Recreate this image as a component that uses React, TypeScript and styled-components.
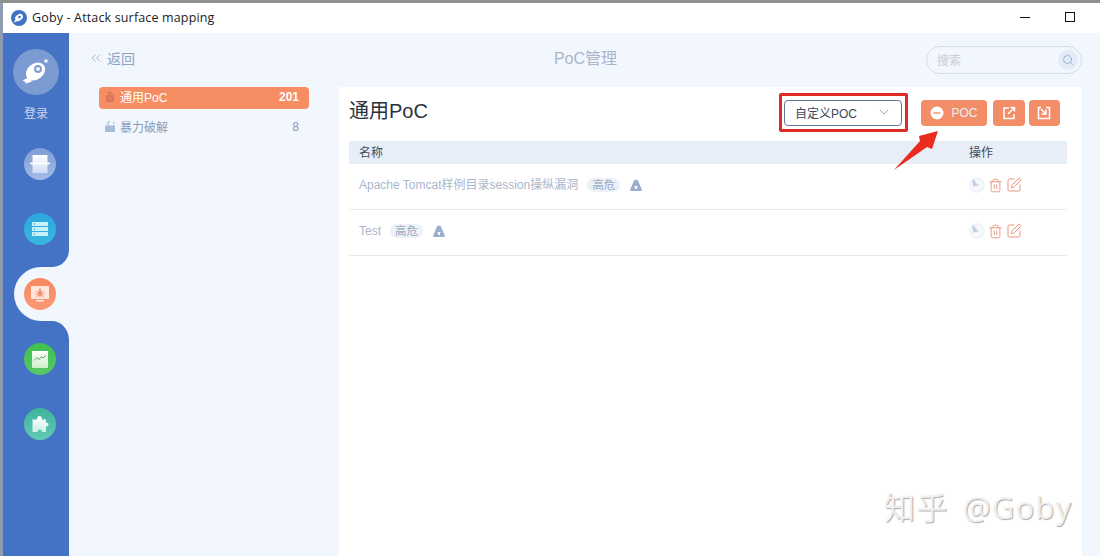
import React from 'react';
import styled, { createGlobalStyle } from 'styled-components';
import { ChevronDown, ChevronsLeft, Search, SquarePen, Trash2 } from 'lucide-react';

const CJK = `"Liberation Sans", "Noto Sans CJK SC", sans-serif`;

const GlobalStyle = createGlobalStyle`
  html, body {
    margin: 0;
    height: 100%;
    overflow: hidden;
    background: #f2f6fd;
    font-family: ${CJK};
  }
  * { box-sizing: border-box; }
`;

const Frame = styled.div`
  position: relative;
  width: 1100px;
  height: 556px;
  display: flex;
  flex-direction: column;
  border-top: 3px solid #8f8f8f;
  background: #f2f6fd;
  overflow: hidden;
`;

const TitleBar = styled.header`
  height: 30px;
  flex: none;
  display: flex;
  align-items: center;
  background: #fff;
  padding-left: 8px;
  border-left: 3px solid #8f9bb0;
`;

const AppName = styled.span`
  margin: -2px 0 0 5px;
  font-family: "Open Sans", sans-serif;
  font-size: 12.5px;
  color: #1c1c1c;
  letter-spacing: 0.15px;
`;

const WindowControls = styled.div`
  margin-left: auto;
  display: flex;
  align-items: center;
  gap: 35px;
  padding: 0 25px 2px 0;
`;

const MinimizeGlyph = styled.span`
  width: 10px;
  height: 1px;
  background: #111;
`;

const MaximizeGlyph = styled.span`
  width: 10px;
  height: 10px;
  border: 1px solid #111;
`;

const Body = styled.div`
  flex: 1;
  display: flex;
  min-height: 0;
`;

const Sidebar = styled.nav`
  width: 69px;
  flex: none;
  background: #4472c4;
  border-left: 3px solid #8f9bb0;
  display: flex;
  flex-direction: column;
  align-items: center;
  padding-top: 16px;
`;

const Avatar = styled.div`
  width: 46px;
  height: 46px;
  flex: none;
  border-radius: 50%;
  background: #7d9bd3;
`;

const LoginText = styled.div`
  margin-top: 11px;
  font-size: 12px;
  line-height: 16px;
  color: #c6d5ef;
`;

const NavList = styled.div`
  margin: 26px 0 0 8px;
  display: flex;
  flex-direction: column;
  gap: 33px;
`;

const NavSlot = styled.div`
  position: relative;
  width: 32px;
  height: 32px;
`;

const NavCircle = styled.div<{ $from: string; $to: string }>`
  position: relative;
  width: 32px;
  height: 32px;
  border-radius: 50%;
  background: linear-gradient(180deg, ${p => p.$from}, ${p => p.$to});
  display: flex;
  align-items: center;
  justify-content: center;
`;

const Notch = styled.svg`
  position: absolute;
  left: -10px;
  top: -28px;
`;

const Main = styled.main`
  flex: 1;
  min-width: 0;
  display: flex;
  flex-direction: column;
  padding-right: 18px;
`;

const TopBar = styled.div`
  height: 54px;
  flex: none;
  display: grid;
  grid-template-columns: 1fr auto 1fr;
  align-items: center;
`;

const BackLink = styled.div`
  display: flex;
  align-items: center;
  gap: 3px;
  padding-left: 19px;
  margin-top: -4px;
  font-size: 14px;
  color: #8ea3c2;
`;

const PageTitle = styled.h1`
  margin: -6px 0 0 20px;
  font-size: 16px;
  font-weight: 400;
  color: #a9b6ca;
`;

const SearchBox = styled.div`
  justify-self: end;
  width: 156px;
  height: 28px;
  margin-top: -1px;
  border: 1px solid #d5deeb;
  border-radius: 14px;
  display: flex;
  align-items: center;
  justify-content: space-between;
  padding: 0 3px 0 10px;
  font-size: 12px;
  color: #c8cdd6;
`;

const SearchIcon = styled.span`
  width: 20px;
  height: 20px;
  border-radius: 50%;
  background: #e3ebf7;
  color: #7f97b8;
  display: flex;
  align-items: center;
  justify-content: center;
`;

const Columns = styled.div`
  flex: 1;
  min-height: 0;
  display: flex;
`;

const Menu = styled.aside`
  width: 270px;
  flex: none;
  padding: 0 30px;
`;

const MenuItem = styled.div<{ $active?: boolean }>`
  height: 22px;
  margin-bottom: 8px;
  padding: 0 10px 3px 6px;
  border-radius: 4px;
  display: flex;
  align-items: center;
  gap: 5px;
  font-size: 12px;
  background: ${p => (p.$active ? '#f68d63' : 'transparent')};
  color: ${p => (p.$active ? '#fff' : '#8b9cb8')};
`;

const MenuCount = styled.span<{ $active?: boolean }>`
  margin-left: auto;
  font-weight: ${p => (p.$active ? 700 : 400)};
`;

const Card = styled.section`
  flex: 1;
  min-width: 0;
  background: #fff;
  padding: 0 15px 0 10px;
`;

const CardHeader = styled.div`
  height: 54px;
  padding-bottom: 3px;
  display: flex;
  align-items: center;
`;

const CardTitle = styled.h2`
  margin: 0 0 6px;
  font-size: 20px;
  font-weight: 400;
  color: #29323f;
`;

const Highlight = styled.div`
  margin-left: auto;
  margin-right: 13px;
  padding: 4px 3px 3px 2px;
  border: 3px solid #dd2c25;
  border-radius: 2px;
`;

const SelectBox = styled.div`
  width: 118px;
  height: 26px;
  border: 1px solid #5d7a9c;
  border-radius: 4px;
  display: flex;
  align-items: center;
  justify-content: space-between;
  padding: 0 9px 2px 10px;
  font-size: 12px;
  color: #3c4858;
`;

const Actions = styled.div`
  display: flex;
  gap: 4px;
  margin-right: 7px;
`;

const ActionButton = styled.button<{ $wide?: boolean }>`
  height: 26px;
  width: ${p => (p.$wide ? 66 : 31.5)}px;
  margin-right: ${p => (p.$wide ? 2 : 0)}px;
  border: 0;
  border-radius: 4px;
  background: #f28d68;
  color: #e9f0f8;
  display: flex;
  align-items: center;
  justify-content: center;
  gap: 7px;
  padding: 0;
  font-family: ${CJK};
  font-size: 12px;
`;

const Row = styled.div<{ $head?: boolean }>`
  display: flex;
  align-items: center;
  padding: 0 0 ${p => (p.$head ? 0 : 3)}px 10px;
  height: ${p => (p.$head ? 23 : 46)}px;
  font-size: 12px;
  line-height: 16px;
  background: ${p => (p.$head ? '#e8eef7' : 'transparent')};
  border-bottom: ${p => (p.$head ? '0' : '1px solid #e6e9ee')};
  color: ${p => (p.$head ? '#3e4a5b' : '#a9b6ca')};
`;

const NameCell = styled.div`
  flex: 1;
  display: flex;
  align-items: center;
  min-width: 0;
`;

const OpCell = styled.div`
  width: 98px;
  flex: none;
  display: flex;
  align-items: center;
  gap: 3px;
  color: #e9957a;
`;

const HeadCell = styled.div`
  width: 98px;
  flex: none;
`;

const Tag = styled.span`
  margin: 0 9px;
  height: 14px;
  padding: 0 5px;
  border-radius: 7px;
  background: #edf1f8;
  display: inline-flex;
  align-items: center;
  font-size: 11.5px;
  color: #98a9c3;
`;

const Arrow = styled.svg`
  position: absolute;
  left: 891px;
  top: 124px;
`;

const Watermark = styled.div`
  position: absolute;
  left: 884px;
  top: 480px;
  font-family: "Open Sans", "Noto Sans CJK SC", sans-serif;
  font-size: 31px;
  letter-spacing: 1.2px;
  word-spacing: 5px;
  color: rgba(243, 243, 243, 0.95);
  text-shadow: 1px 1px 1px #adadad;
`;

const Logo = () => (
  <svg width="16" height="16" viewBox="0 0 16 16">
    <circle cx="8" cy="8" r="8" fill="#3f74c4" />
    <ellipse cx="8" cy="7.500" rx="4.200" ry="3" transform="rotate(-35 8 7.500)" fill="#fff" />
    <path d="M2.500 12.500l2-2.500 1.500 1.500z" fill="#fff" />
    <circle cx="8.500" cy="7" r="1.300" fill="#3f74c4" />
  </svg>
);

const Fish = () => (
  <svg width="46" height="46" viewBox="0 0 46 46">
    <ellipse cx="22.500" cy="22.500" rx="10.500" ry="8" transform="rotate(-38 22.500 22.500)" fill="#fff" />
    <path d="M9.500 31.500l6-3 3.500 4c-2 1-4.500 1-6.500 2.500.5-1.500 0-2.500-3-3.500z" fill="#fff" />
    <circle cx="25" cy="20" r="3" fill="#eef3fb" stroke="#7d9bd3" strokeWidth="1.800" />
    <circle cx="33" cy="12" r="1.800" fill="#eef3fb" />
  </svg>
);

const ScanIcon = () => (
  <svg width="20" height="18" viewBox="0 0 20 18">
    <defs>
      <linearGradient id="scanFill" x1="0" y1="0" x2="0" y2="1">
        <stop offset="0" stopColor="#ffffff" />
        <stop offset="1" stopColor="#cfdcf5" />
      </linearGradient>
    </defs>
    <path d="M2.500 0h15v18h-15z" fill="url(#scanFill)" />
    <rect x="0" y="7.500" width="20" height="2" rx="1" fill="#fff" />
  </svg>
);

const ListIcon = () => (
  <svg width="16" height="14" viewBox="0 0 16 14">
    <path d="M0 0h16v4H0zM0 5h16v4H0zM0 10h16v4H0z" fill="#c9f0fb" />
    <circle cx="2.500" cy="2" r=".7" fill="#2b9dd6" />
    <circle cx="2.500" cy="7" r=".7" fill="#2b9dd6" />
    <circle cx="2.500" cy="12" r=".7" fill="#2b9dd6" />
  </svg>
);

const BugIcon = () => (
  <svg width="18" height="16" viewBox="0 0 18 16">
    <path d="M0 0h18v13H0z" fill="#ffe6db" />
    <path d="M5 14h8v1.500H5z" fill="#ffe6db" />
    <ellipse cx="9" cy="7.800" rx="2.300" ry="3" fill="#f39272" />
    <circle cx="9" cy="3.800" r="1.200" fill="#f39272" />
    <path d="M4.800 5l2 1.300M13.200 5l-2 1.300M4.300 8h2.200M13.700 8h-2.200M4.800 11l2-1.300M13.200 11l-2-1.300" stroke="#f39272" strokeWidth=".9" />
  </svg>
);

const ChartIcon = () => (
  <svg width="16" height="17" viewBox="0 0 16 17">
    <defs>
      <linearGradient id="chartFill" x1="0" y1="0" x2="0" y2="1">
        <stop offset="0" stopColor="#ffffff" />
        <stop offset="1" stopColor="#cdeec6" />
      </linearGradient>
    </defs>
    <path d="M0 0h16v17H0z" fill="url(#chartFill)" />
    <path d="M2 9.500l3-3 2 2 2.500-3 1.500 1.500L14 4.500" fill="none" stroke="#5ea764" strokeWidth="1" />
  </svg>
);

const PuzzleIcon = () => (
  <svg width="17" height="18" viewBox="0 0 17 18">
    <defs>
      <linearGradient id="puzzleFill" x1="0" y1="0" x2="0" y2="1">
        <stop offset="0" stopColor="#ffffff" />
        <stop offset="1" stopColor="#cdeee6" />
      </linearGradient>
    </defs>
    <path
      d="M.5 4.500h4.700C4.800 2.600 5.800 1 7.500 1s2.700 1.600 2.300 3.500H14v3.300c1.200-.3 2.500.3 2.500 1.800s-1.300 2.200-2.500 1.800V17H9.800c.4-1.500-.6-2.500-2-2.500s-2.400 1-2 2.500H.5z"
      fill="url(#puzzleFill)"
    />
  </svg>
);

const GiftIcon = () => (
  <svg width="10" height="11" viewBox="0 0 10 11">
    <path d="M1 4h8v7H1z" fill="#d9785a" />
    <circle cx="5" cy="2.200" r="1.800" fill="#d9785a" />
    <path d="M4.500 6h1v3h-1z" fill="#f68d63" />
  </svg>
);

const LockIcon = () => (
  <svg width="10" height="11" viewBox="0 0 10 11">
    <path d="M0 4.500h10V11H0z" fill="#a9bbd6" />
    <path d="M3 4.500V2.300C3 1 4 .5 5 .5" fill="none" stroke="#a9bbd6" strokeWidth="1.200" />
    <path d="M8 .5l1.500 1.500L8 3.500z" fill="#a9bbd6" />
  </svg>
);

const ExportIcon = () => (
  <svg width="14" height="14" viewBox="0 0 14 14" fill="none" stroke="#fff" strokeWidth="1.500">
    <path d="M7 2H2v10.500h10V8" />
    <path d="M6 8l6-6M8.500 1.500h4v4" />
  </svg>
);

const ImportIcon = () => (
  <svg width="14" height="14" viewBox="0 0 14 14" fill="none" stroke="#fff" strokeWidth="1.500">
    <path d="M4 1.500H1.500v11h11v-11H9" />
    <path d="M4 3l4.500 4.500M9 3.500v4.500H4.500" />
  </svg>
);

const PlusDot = () => (
  <svg width="14" height="14" viewBox="0 0 14 14">
    <circle cx="7" cy="7" r="6.500" fill="#fff" />
    <path d="M3.500 6.300h7v1.400h-7z" fill="#f28d68" />
  </svg>
);

const LevelIcon = () => (
  <svg width="12" height="12" viewBox="0 0 12 12" style={{ marginLeft: 1 }}>
    <path d="M4 1.500C4.600.6 7.400.6 8 1.500L12 11c-.2.600-.6 1-1.200 1H1.200C.6 12 .2 11.600 0 11z" fill="#9caecd" />
    <path d="M5 8h2v2H5zM4.500 7h3v1h-3z" fill="#fff" />
  </svg>
);

const RunIcon = () => (
  <svg width="16" height="16" viewBox="0 0 16 16">
    <circle cx="8" cy="8" r="7.200" fill="#f6f8fb" stroke="#e8edf4" />
    <path d="M3.500 2.500C5 2 6.500 3.500 7 6l3 2.500-5.500 1C3.500 7 3 4.500 3.500 2.500z" fill="#c5d1e3" />
  </svg>
);

const rows = [
  { name: 'Apache Tomcat样例目录session操纵漏洞' },
  { name: 'Test' },
];

export default function App() {
  return (
    <>
      <GlobalStyle />
      <Frame>
        <TitleBar>
          <Logo />
          <AppName>Goby - Attack surface mapping</AppName>
          <WindowControls>
            <MinimizeGlyph />
            <MaximizeGlyph />
          </WindowControls>
        </TitleBar>
        <Body>
          <Sidebar>
            <Avatar><Fish /></Avatar>
            <LoginText>登录</LoginText>
            <NavList>
              <NavSlot><NavCircle $from="#7f9dd6" $to="#a3bae4"><ScanIcon /></NavCircle></NavSlot>
              <NavSlot><NavCircle $from="#2ba6de" $to="#38b9e0"><ListIcon /></NavCircle></NavSlot>
              <NavSlot>
                <Notch width="55" height="90" viewBox="0 0 55 90">
                  <path
                    d="M55 0c0 10-8 17-17 17H27a27 27 0 0 0 0 54h11c9 0 17 8 17 19z"
                    fill="#f2f6fd"
                  />
                </Notch>
                <NavCircle $from="#f6895f" $to="#fb9a78"><BugIcon /></NavCircle>
              </NavSlot>
              <NavSlot><NavCircle $from="#3cc04f" $to="#59c766"><ChartIcon /></NavCircle></NavSlot>
              <NavSlot><NavCircle $from="#3fb39a" $to="#62c9b5"><PuzzleIcon /></NavCircle></NavSlot>
            </NavList>
          </Sidebar>
          <Main>
            <TopBar>
              <BackLink><ChevronsLeft size={16} strokeWidth={1.1} />返回</BackLink>
              <PageTitle>PoC管理</PageTitle>
              <SearchBox>
                搜索
                <SearchIcon><Search size={12} strokeWidth={1.3} /></SearchIcon>
              </SearchBox>
            </TopBar>
            <Columns>
              <Menu>
                <MenuItem $active>
                  <GiftIcon />通用PoC
                  <MenuCount $active>201</MenuCount>
                </MenuItem>
                <MenuItem>
                  <LockIcon />暴力破解
                  <MenuCount>8</MenuCount>
                </MenuItem>
              </Menu>
              <Card>
                <CardHeader>
                  <CardTitle>通用PoC</CardTitle>
                  <Highlight>
                    <SelectBox>
                      自定义POC
                      <ChevronDown size={16} strokeWidth={1} color="#6c7f96" />
                    </SelectBox>
                  </Highlight>
                  <Actions>
                    <ActionButton $wide><PlusDot />POC</ActionButton>
                    <ActionButton><ExportIcon /></ActionButton>
                    <ActionButton><ImportIcon /></ActionButton>
                  </Actions>
                </CardHeader>
                <Row $head>
                  <NameCell>名称</NameCell>
                  <HeadCell>操作</HeadCell>
                </Row>
                {rows.map(row => (
                  <Row key={row.name}>
                    <NameCell>
                      {row.name}
                      <Tag>高危</Tag>
                      <LevelIcon />
                    </NameCell>
                    <OpCell>
                      <RunIcon />
                      <Trash2 size={15} strokeWidth={1.5} />
                      <SquarePen size={16} strokeWidth={1.5} />
                    </OpCell>
                  </Row>
                ))}
              </Card>
            </Columns>
          </Main>
        </Body>
        <Arrow width="60" height="46" viewBox="0 0 60 46">
          <path d="M3 43L29 14l-1-5 19-5-6 18-5-2z" fill="#ea2b1f" />
        </Arrow>
        <Watermark>知乎 @Goby</Watermark>
      </Frame>
    </>
  );
}
